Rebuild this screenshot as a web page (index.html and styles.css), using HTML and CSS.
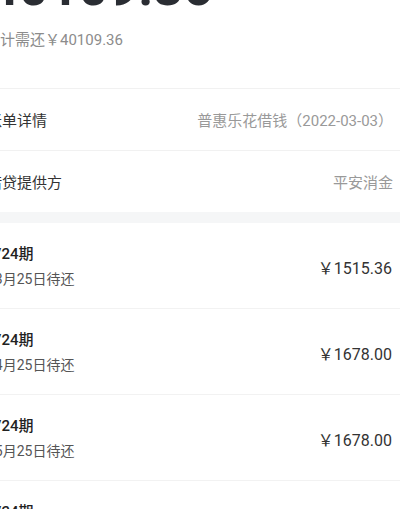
FILE: index.html
```html
<!DOCTYPE html>
<html lang="zh-CN">
<head>
    <meta charset="UTF-8">
    <meta name="viewport" content="width=device-width, initial-scale=1.0">
    <title>账单详情</title>
    <link rel="stylesheet" href="styles.css">
</head>
<body>
    <div class="page">
        <!-- Summary -->
        <div class="summary">
            <div class="total">40109.36</div>
            <div class="total-note">合计需还￥40109.36</div>
        </div>

        <!-- Bill info -->
        <div class="info">
            <div class="info-row">
                <span class="label">账单详情</span>
                <span class="value">普惠乐花借钱（2022-03-03）</span>
            </div>
            <div class="info-row">
                <span class="label">借贷提供方</span>
                <span class="value">平安消金</span>
            </div>
        </div>

        <div class="gap"></div>

        <!-- Installments -->
        <div class="plan">
            <div class="plan-row">
                <div class="plan-text">
                    <div class="term">1/24期</div>
                    <div class="due">03月25日待还</div>
                </div>
                <div class="amount">￥1515.36</div>
            </div>
            <div class="plan-row">
                <div class="plan-text">
                    <div class="term">2/24期</div>
                    <div class="due">04月25日待还</div>
                </div>
                <div class="amount">￥1678.00</div>
            </div>
            <div class="plan-row">
                <div class="plan-text">
                    <div class="term">3/24期</div>
                    <div class="due">05月25日待还</div>
                </div>
                <div class="amount">￥1678.00</div>
            </div>
            <div class="plan-row">
                <div class="plan-text">
                    <div class="term">4/24期</div>
                    <div class="due">06月25日待还</div>
                </div>
                <div class="amount">￥1678.00</div>
            </div>
        </div>
    </div>
</body>
</html>
```

FILE: styles.css
```css
body {
    margin: 0;
    background: #fff;
    font-family: Roboto, "Noto Sans CJK SC", sans-serif;
    overflow: hidden;
}

.page {
    margin-left: -13px;
}

/* Summary */
.summary {
    padding-bottom: 37px;
    border-bottom: 1px solid #f1f1f1;
}

.total {
    margin-top: -38px;
    margin-left: 2px;
    font-size: 52px;
    line-height: 52px;
    font-weight: 700;
    color: #2a2d33;
}

.total-note {
    margin-top: 15px;
    margin-left: -2px;
    font-size: 15px;
    line-height: 22px;
    color: #8c8c8c;
}

/* Info rows */
.info-row {
    display: flex;
    justify-content: space-between;
    align-items: center;
    height: 61px;
    padding-right: 7px;
    font-size: 15px;
}

.info-row + .info-row {
    border-top: 1px solid #f1f1f1;
}

.label {
    color: #333;
}

.value {
    color: #999;
}

.gap {
    height: 11px;
    background: #f5f6f7;
}

/* Installments */
.plan-row {
    display: flex;
    justify-content: space-between;
    align-items: center;
    padding: 20px 8px 18px 0;
    border-bottom: 1px solid #f2f2f2;
}

.term {
    font-size: 15px;
    line-height: 22px;
    font-weight: 500;
    color: #222;
}

.due {
    margin-top: 3px;
    font-size: 14px;
    line-height: 22px;
    color: #555;
}

.amount {
    font-size: 16px;
    color: #333;
}
```
